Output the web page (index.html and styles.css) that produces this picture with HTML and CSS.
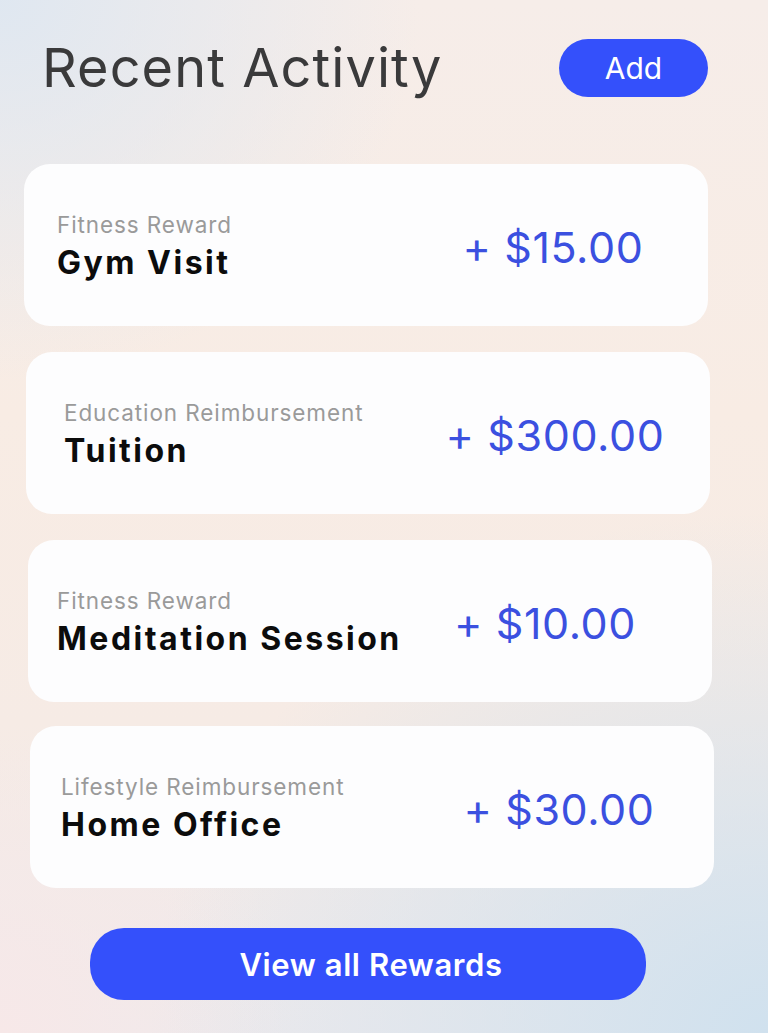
FILE: index.html
```html
<!DOCTYPE html>
<html lang="en">
<head>
<meta charset="utf-8">
<title>Recent Activity</title>
<link rel="stylesheet" href="styles.css">
</head>
<body>
<main class="page">
  <header class="header">
    <h1 class="title">Recent Activity</h1>
    <button class="add-btn">Add</button>
  </header>
  <section class="list">
    <article class="card card-1">
      <div class="info">
        <div class="label">Fitness Reward</div>
        <div class="name">Gym Visit</div>
      </div>
      <div class="amount">+ $15.00</div>
    </article>
    <article class="card card-2">
      <div class="info">
        <div class="label">Education Reimbursement</div>
        <div class="name">Tuition</div>
      </div>
      <div class="amount">+ $300.00</div>
    </article>
    <article class="card card-3">
      <div class="info">
        <div class="label">Fitness Reward</div>
        <div class="name">Meditation Session</div>
      </div>
      <div class="amount">+ $10.00</div>
    </article>
    <article class="card card-4">
      <div class="info">
        <div class="label">Lifestyle Reimbursement</div>
        <div class="name">Home Office</div>
      </div>
      <div class="amount">+ $30.00</div>
    </article>
  </section>
  <div class="footer">
    <button class="view-btn">View all Rewards</button>
  </div>
</main>
</body>
</html>
```

FILE: styles.css
```css
* { box-sizing: border-box; }
html, body { margin: 0; height: 100%; }
body {
  width: 768px;
  min-height: 1033px;
  font-family: Inter, "Liberation Sans", sans-serif;
  background:
    radial-gradient(ellipse 420px 380px at 0% 0%, rgba(222,231,241,0.95), rgba(222,231,241,0) 100%),
    radial-gradient(ellipse 620px 520px at 100% 100%, rgba(208,225,238,1), rgba(208,225,238,0) 100%),
    radial-gradient(ellipse 300px 300px at 0% 100%, rgba(247,232,232,1), rgba(247,232,232,0) 100%),
    linear-gradient(180deg, #f6ede9 0%, #f8ece4 40%, #f6ebe5 70%, #eeeaec 100%);
  overflow: hidden;
}
.page { padding-top: 39px; }
.header {
  display: flex;
  align-items: center;
  justify-content: space-between;
  padding: 0 60px 0 42px;
  height: 58px;
}
.title {
  margin: 0;
  font-weight: 400;
  font-size: 54px;
  letter-spacing: 1.1px;
  color: #3a3a3b;
  line-height: 1;
}
.add-btn {
  width: 149px;
  height: 58px;
  border: none;
  border-radius: 29px;
  background: #3450fb;
  color: #fff;
  font-family: Inter, "Liberation Sans", sans-serif;
  font-size: 30px;
  font-weight: 400;
  padding: 0;
}
.list {
  display: flex;
  flex-direction: column;
  gap: 26px;
  margin-top: 67px;
}
.card {
  width: 684px;
  height: 162px;
  background: #fdfdfe;
  border-radius: 26px;
  display: flex;
  align-items: center;
  justify-content: space-between;
  padding-left: 33px;
  padding-right: 30px;
}
.card-1 { margin-left: 24px; }
.card-2 { margin-left: 26px; padding-left: 38px; }
.card-3 { margin-left: 28px; padding-left: 29px; }
.card-4 { margin-left: 30px; padding-left: 31px; margin-top: -2px; }
.info { display: flex; flex-direction: column; position: relative; top: 4px; }
.label {
  font-size: 22.5px;
  color: #9a9a9a;
  line-height: 28px;
  letter-spacing: 0.9px;
}
.name {
  font-size: 32px;
  font-weight: 700;
  color: #0c0c0c;
  line-height: 48px;
  letter-spacing: 2.5px;
}
.amount {
  width: 250px;
  text-align: center;
  font-size: 43px;
  color: #3b50e0;
  font-weight: 400;
  letter-spacing: 0.6px;
  position: relative;
  top: 2px;
}
.card-3 .amount { margin-right: 12px; }
.footer {
  display: flex;
  padding-left: 90px;
  margin-top: 40px;
}
.view-btn {
  width: 556px;
  height: 72px;
  border: none;
  border-radius: 34px;
  background: #3450fb;
  color: #fff;
  font-family: Inter, "Liberation Sans", sans-serif;
  font-size: 31px;
  font-weight: 600;
  letter-spacing: 0.6px;
  padding: 0 0 0 6px;
}
```
